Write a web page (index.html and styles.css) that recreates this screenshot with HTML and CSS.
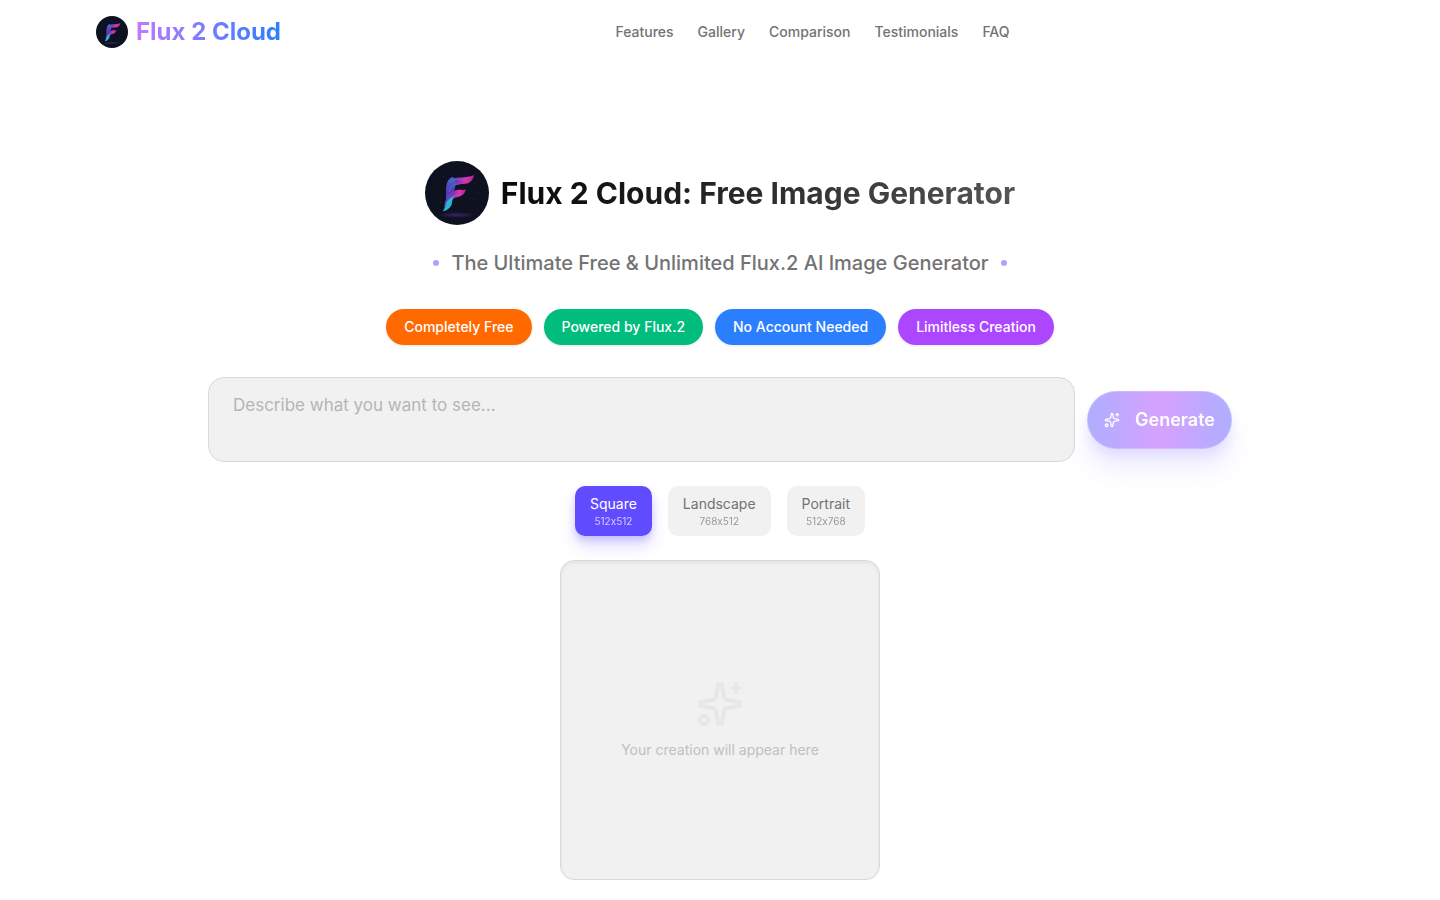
FILE: index.html
```html
<!DOCTYPE html>
<html lang="en">
<head>
    <meta charset="UTF-8">
    <meta name="viewport" content="width=device-width, initial-scale=1.0">
    <title>Flux 2 Cloud: Free Image Generator</title>
    <link rel="stylesheet" href="styles.css">
</head>
<body>
    <!-- shared shapes -->
    <svg class="defs" aria-hidden="true">
        <defs>
            <linearGradient id="stroke-top" x1="0" y1="0" x2="1" y2="0">
                <stop offset="0" stop-color="#3a55b8"/>
                <stop offset="0.4" stop-color="#7d33b8"/>
                <stop offset="0.7" stop-color="#e62fae"/>
                <stop offset="1" stop-color="#a8288f"/>
            </linearGradient>
            <linearGradient id="stroke-stem" x1="0" y1="0" x2="0" y2="1">
                <stop offset="0" stop-color="#3f6fc8"/>
                <stop offset="0.45" stop-color="#5a35b4"/>
                <stop offset="0.75" stop-color="#3469c8"/>
                <stop offset="1" stop-color="#25c8d0"/>
            </linearGradient>
            <radialGradient id="logo-glow">
                <stop offset="0" stop-color="#4a2f86" stop-opacity="0.7"/>
                <stop offset="1" stop-color="#4a2f86" stop-opacity="0"/>
            </radialGradient>
            <symbol id="logo" viewBox="0 0 64 64">
                <circle cx="32" cy="32" r="32" fill="#0d1120"/>
                <ellipse cx="32" cy="54" rx="19" ry="3" fill="url(#logo-glow)"/>
                <path d="M21 30c0-8 2-12 8-13 7-1 14 0 20-3-1 6-5 9-11 9-5 0-9 1-11 5-1 3-3 6-5 8z" fill="url(#stroke-top)"/>
                <path d="M22 24c0-4 2-7 6-8 3 4 3 9 1 14-1 6-1 11-5 16-2 3-4 4-6 4 2-3 3-6 3-10 0-6 0-11 1-16z" fill="url(#stroke-stem)"/>
                <path d="M20 41c2-7 6-11 12-12 4-1 7 1 9-1-1 5-4 7-8 8-5 1-7 3-8 6-1 4-4 6-6 7 1-3 0-5 1-8z" fill="url(#stroke-top)"/>
                <path d="M18 50c5-1 9-4 9-9 0-2 1-4 3-6-5 2-8 4-9 8-1 3-1 5-3 7z" fill="#31b3d3"/>
                <path d="M25 21c6-5 13-1 19-5M24 31c1-6 6-8 11-8M24 39c2-5 7-4 12-6" fill="none" stroke="#557fdf" stroke-width="0.6"/>
                <path d="M18 15h1M49 22h1M15 41h1M48 39h1M40 12h1M53 32h1" stroke="#20344f" stroke-width="1"/>
            </symbol>
            <symbol id="sparkles" viewBox="0 0 24 24">
                <g fill="none" stroke="currentColor" stroke-width="2" stroke-linecap="round" stroke-linejoin="round">
                    <path d="M11.017 2.814a1 1 0 0 1 1.966 0l1.051 5.558a2 2 0 0 0 1.594 1.594l5.558 1.051a1 1 0 0 1 0 1.966l-5.558 1.051a2 2 0 0 0-1.594 1.594l-1.051 5.558a1 1 0 0 1-1.966 0l-1.051-5.558a2 2 0 0 0-1.594-1.594l-5.558-1.051a1 1 0 0 1 0-1.966l5.558-1.051a2 2 0 0 0 1.594-1.594z"/>
                    <path d="M20 2v4M22 4h-4"/>
                    <circle cx="4" cy="20" r="2"/>
                </g>
            </symbol>
        </defs>
    </svg>

    <header class="site-header">
        <a class="brand" href="#">
            <svg class="brand-logo" aria-hidden="true"><use href="#logo"/></svg>
            <span class="brand-name">Flux 2 Cloud</span>
        </a>
        <nav class="site-nav">
            <a href="#features">Features</a>
            <a href="#gallery">Gallery</a>
            <a href="#comparison">Comparison</a>
            <a href="#testimonials">Testimonials</a>
            <a href="#faq">FAQ</a>
        </nav>
        <div class="header-actions"></div>
    </header>

    <main class="hero">
        <div class="hero-title">
            <svg class="hero-logo" aria-hidden="true"><use href="#logo"/></svg>
            <h1>Flux 2 Cloud: Free Image Generator</h1>
        </div>
        <p class="tagline">The Ultimate Free &amp; Unlimited Flux.2 AI Image Generator</p>
        <div class="badges">
            <span class="badge orange">Completely Free</span>
            <span class="badge green">Powered by Flux.2</span>
            <span class="badge blue">No Account Needed</span>
            <span class="badge purple">Limitless Creation</span>
        </div>

        <form class="generator">
            <div class="prompt-row">
                <textarea class="prompt" aria-label="Prompt" placeholder="Describe what you want to see..."></textarea>
                <button type="submit" class="generate" disabled>
                    <svg aria-hidden="true"><use href="#sparkles"/></svg>
                    <span>Generate</span>
                </button>
            </div>
            <div class="sizes">
                <button type="button" class="size active">Square<small>512x512</small></button>
                <button type="button" class="size">Landscape<small>768x512</small></button>
                <button type="button" class="size">Portrait<small>512x768</small></button>
            </div>
        </form>

        <div class="preview">
            <svg aria-hidden="true"><use href="#sparkles"/></svg>
            <p>Your creation will appear here</p>
        </div>
    </main>
</body>
</html>
```
FILE: styles.css
```css
* {
    box-sizing: border-box;
}
body {
    margin: 0;
    font-family: Inter, "Liberation Sans", sans-serif;
    font-variant-ligatures: no-contextual;
    background: #fff;
    color: #0a0a0a;
}
h1, p {
    margin: 0;
}
button, textarea {
    font-family: inherit;
    font-variant-ligatures: inherit;
}
.defs {
    position: absolute;
    width: 0;
    height: 0;
}
.site-header {
    display: flex;
    justify-content: space-between;
    align-items: center;
    max-width: 1280px;
    height: 64px;
    margin: 0 auto;
    padding: 0 16px;
}
.brand {
    display: flex;
    align-items: center;
    gap: 8px;
    text-decoration: none;
}
.brand-logo {
    width: 32px;
    height: 32px;
}
.brand-name {
    font-size: 24px;
    line-height: 32px;
    font-weight: 700;
    background: linear-gradient(to right, #c27aff, #2b7fff);
    background-clip: text;
    -webkit-background-clip: text;
    color: transparent;
}
.site-nav {
    display: flex;
    gap: 24px;
}
.site-nav a {
    font-size: 14px;
    line-height: 20px;
    font-weight: 500;
    color: #737373;
    text-decoration: none;
}
.hero {
    display: flex;
    flex-direction: column;
    align-items: center;
    max-width: 1056px;
    margin: 0 auto;
    padding: 97px 16px 20px;
}
.hero-title {
    display: flex;
    align-items: center;
    gap: 12px;
}
.hero-logo {
    width: 64px;
    height: 64px;
}
.hero-title h1 {
    font-size: 30px;
    line-height: 40px;
    font-weight: 700;
    background: linear-gradient(to right, #0a0a0a, #171717 25%, #555);
    background-clip: text;
    -webkit-background-clip: text;
    color: transparent;
}
.tagline {
    display: flex;
    align-items: center;
    gap: 12px;
    margin-top: 24px;
    font-size: 20px;
    line-height: 28px;
    font-weight: 500;
    color: #737373;
}
.tagline::before, .tagline::after {
    content: "";
    width: 6px;
    height: 6px;
    border-radius: 50%;
    background: #b0a2ff;
}
.badges {
    display: flex;
    flex-wrap: wrap;
    justify-content: center;
    gap: 12px;
    margin-top: 32px;
}
.badge {
    padding: 8px 18px;
    border-radius: 18px;
    font-size: 14px;
    line-height: 20px;
    font-weight: 500;
    color: #fff;
    box-shadow: 0 1px 3px rgba(0, 0, 0, 0.1);
}
.orange {
    background: #ff6900;
}
.green {
    background: #00bc7d;
}
.blue {
    background: #2b7fff;
}
.purple {
    background: #ad46ff;
}
.generator {
    width: 100%;
    margin-top: 32px;
}
.prompt-row {
    display: flex;
    align-items: center;
    gap: 12px;
}
.prompt {
    flex: 1;
    min-width: 0;
    height: 85px;
    padding: 13px 24px;
    border: 1px solid #d9d9d9;
    border-radius: 16px;
    background: #f1f1f1;
    font-size: 17px;
    line-height: 28px;
    color: #0a0a0a;
    resize: none;
}
.prompt::placeholder {
    color: #b5b5b5;
}
.generate {
    display: flex;
    align-items: center;
    gap: 15px;
    height: 58px;
    padding: 0 16px;
    border: 1px solid rgba(255, 255, 255, 0.2);
    border-radius: 29px;
    background: linear-gradient(to right, #615fff, #ad46ff 50%, #615fff);
    color: #fff;
    font-size: 18px;
    line-height: 28px;
    font-weight: 600;
    box-shadow: 0 20px 25px rgba(97, 75, 255, 0.2), 0 8px 10px rgba(97, 75, 255, 0.2);
    opacity: 0.5;
}
.generate svg {
    width: 16px;
    height: 16px;
}
.sizes {
    display: flex;
    justify-content: center;
    gap: 16px;
    margin-top: 24px;
}
.size {
    padding: 8px 15px;
    border: 0;
    border-radius: 10px;
    background: #f1f1f1;
    color: #737373;
    font-size: 14px;
    line-height: 20px;
    text-align: center;
}
.size small {
    display: block;
    font-size: 10px;
    line-height: 14px;
    opacity: 0.7;
}
.size.active {
    background: #614bff;
    color: #fff;
    box-shadow: 0 10px 15px rgba(97, 75, 255, 0.2), 0 4px 6px rgba(97, 75, 255, 0.2);
}
.preview {
    display: flex;
    flex-direction: column;
    align-items: center;
    justify-content: center;
    gap: 12px;
    width: 100%;
    max-width: 320px;
    aspect-ratio: 1;
    margin-top: 24px;
    border: 1px solid #d9d9d9;
    border-radius: 14px;
    background: #f1f1f1;
    box-shadow: inset 0 2px 4px rgba(0, 0, 0, 0.06);
}
.preview svg {
    width: 48px;
    height: 48px;
    color: #e7e7e7;
}
.preview p {
    font-size: 14px;
    line-height: 20px;
    color: #c0c0c0;
}
```
